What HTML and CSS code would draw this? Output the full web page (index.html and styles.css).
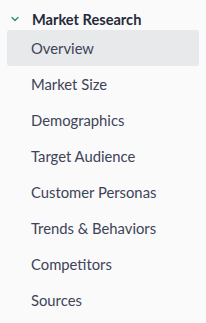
FILE: index.html
```html
<!DOCTYPE html>
<html lang="en">
<head>
  <meta charset="UTF-8" />
  <title>Market Research</title>
  <link rel="stylesheet" href="styles.css">
</head>
<body>
  <nav class="sidebar">
    <div class="group-header">
      <svg class="chevron" width="8" height="6" viewBox="0 0 8 6">
        <path d="M1 1.5 L4 4.5 L7 1.5" fill="none" stroke="#2f8f6a" stroke-width="1.4" stroke-linecap="round" stroke-linejoin="round"/>
      </svg>
      <span>Market Research</span>
    </div>
    <ul class="nav-list">
      <li class="nav-item active">Overview</li>
      <li class="nav-item">Market Size</li>
      <li class="nav-item">Demographics</li>
      <li class="nav-item">Target Audience</li>
      <li class="nav-item">Customer Personas</li>
      <li class="nav-item">Trends &amp; Behaviors</li>
      <li class="nav-item">Competitors</li>
      <li class="nav-item">Sources</li>
    </ul>
  </nav>
</body>
</html>
```

FILE: styles.css
```css
* {
  box-sizing: border-box;
}

body {
  margin: 0;
  background: #fafafa;
  font-family: Lato, "Noto Sans", sans-serif;
  color: #3d4458;
}

.sidebar {
  padding: 8px 7px 0 7px;
}

.group-header {
  display: flex;
  align-items: center;
  height: 22px;
  padding-left: 4px;
  font-size: 14.6px;
  font-weight: 700;
  color: #252b3b;
}

.chevron {
  margin-right: 13px;
}

.nav-list {
  list-style: none;
  margin: 0;
  padding: 0;
}

.nav-item {
  height: 36px;
  line-height: 36px;
  padding-left: 24px;
  font-size: 14.8px;
  border-radius: 3px;
}

.nav-item.active {
  background: #e8e9eb;
}
```
